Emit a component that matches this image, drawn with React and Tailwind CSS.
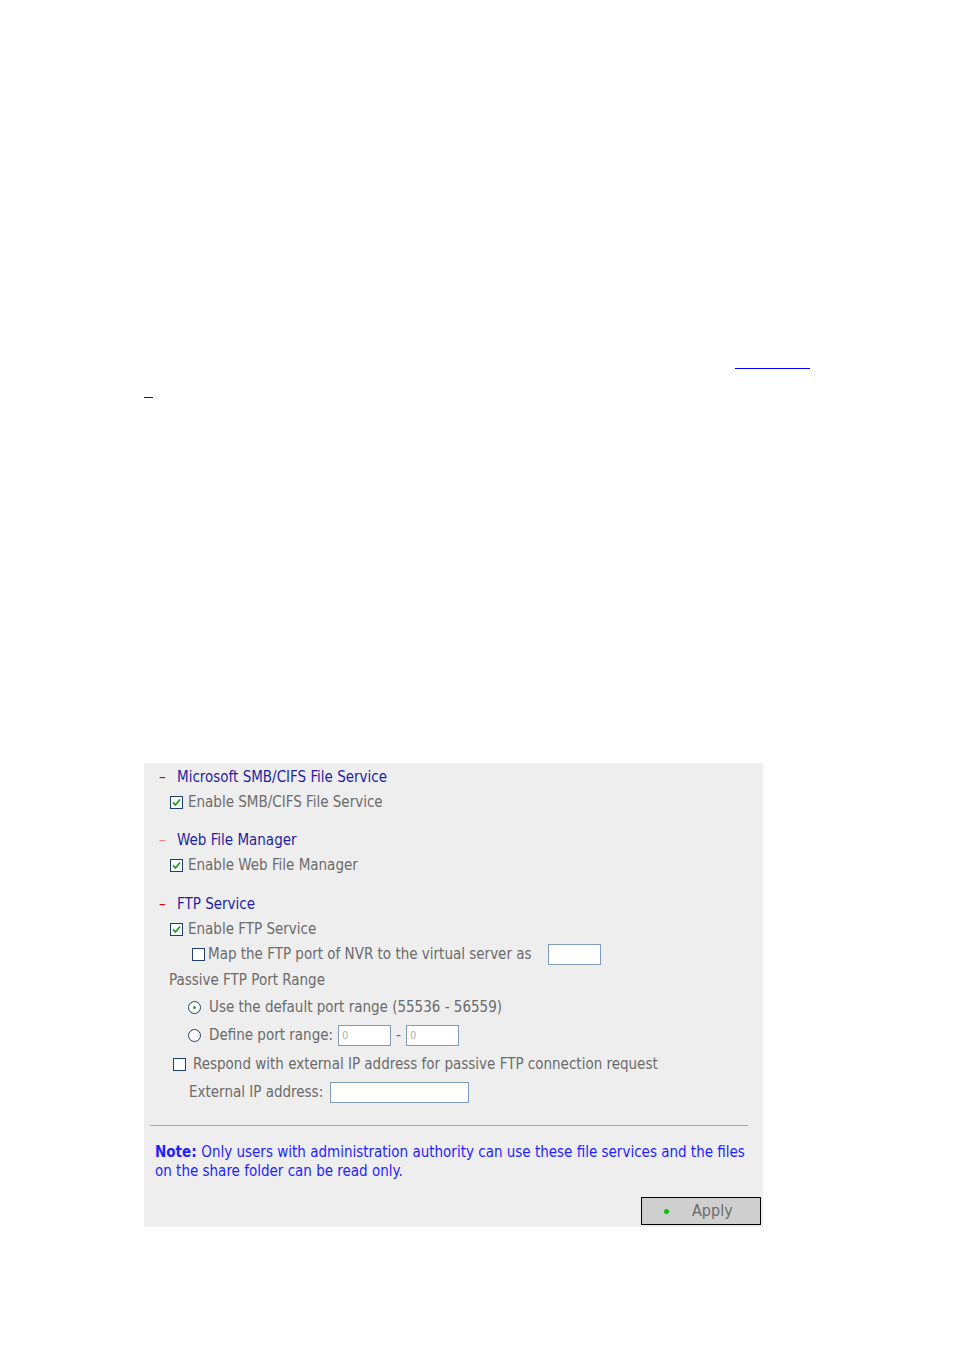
import React from 'react';

function Check({ checked }) {
  return (
    <span className="inline-flex w-[13px] h-[13px] border border-[#1c3f6e] bg-white items-center justify-center shrink-0">
      {checked && (
        <svg width="9" height="9" viewBox="0 0 9 9">
          <path d="M1 4.5 L3.5 7 L8 1.5" fill="none" stroke="#21a121" strokeWidth="1.8" />
        </svg>
      )}
    </span>
  );
}

function Radio({ checked }) {
  return (
    <span className="inline-flex w-[13px] h-[13px] rounded-full border border-[#1c3f6e] bg-white items-center justify-center shrink-0">
      {checked && <span className="w-[3px] h-[3px] rounded-full bg-[#21a121]" />}
    </span>
  );
}

function Heading({ children, faded }) {
  return (
    <div className="h-[25px] flex items-center">
      <span className={'w-[33px] pl-[15px] ' + (faded ? 'text-[#f08080]' : 'text-[#e00000]')}>–</span>
      <span className="text-[#1f1fa0]">{children}</span>
    </div>
  );
}

export default function App() {
  return (
    <div className="w-[954px] h-[1350px] bg-white" style={{ fontFamily: 'Tahoma, "DejaVu Sans Condensed", "Liberation Sans", sans-serif' }}>
      <div className="h-[368px]" />
      <div className="ml-[735px] w-[75px] h-px bg-[#0000ff]" />
      <div className="h-[28px]" />
      <div className="ml-[144px] w-[9px] h-px bg-[#0000ff]" />
      <div className="h-[365px]" />

      <div className="ml-[144px] w-[619px] h-[464px] bg-[#eeeeee] pt-[2px] text-[15px] text-[#6b6b6b]">
        <Heading>Microsoft SMB/CIFS File Service</Heading>
        <div className="h-[25px] flex items-center gap-[5px] pl-[26px]">
          <Check checked />
          <span>Enable SMB/CIFS File Service</span>
        </div>

        <div className="mt-[13px]">
          <Heading faded>Web File Manager</Heading>
        </div>
        <div className="h-[25px] flex items-center gap-[5px] pl-[26px]">
          <Check checked />
          <span>Enable Web File Manager</span>
        </div>

        <div className="mt-[14px]">
          <Heading>FTP Service</Heading>
        </div>
        <div className="h-[25px] flex items-center gap-[5px] pl-[26px]">
          <Check checked />
          <span>Enable FTP Service</span>
        </div>
        <div className="h-[25px] flex items-center pl-[48px]">
          <Check />
          <span className="ml-[3px]">Map the FTP port of NVR to the virtual server as</span>
          <span className="ml-[16px] w-[53px] h-[21px] border border-[#7f9db9] bg-white" />
        </div>
        <div className="h-[26px] flex items-center pl-[25px]">Passive FTP Port Range</div>
        <div className="h-[28px] flex items-center gap-[8px] pl-[44px]">
          <Radio checked />
          <span>Use the default port range (55536 - 56559)</span>
        </div>
        <div className="h-[29px] flex items-center pl-[44px]">
          <Radio />
          <span className="ml-[8px]">Define port range:</span>
          <span className="ml-[5px] w-[53px] h-[21px] border border-[#7f9db9] bg-white text-[11px] text-[#b0b0b0] pl-[3px] leading-[19px]">0</span>
          <span className="mx-[5px]">-</span>
          <span className="w-[53px] h-[21px] border border-[#7f9db9] bg-white text-[11px] text-[#b0b0b0] pl-[3px] leading-[19px]">0</span>
        </div>
        <div className="h-[29px] flex items-center gap-[7px] pl-[29px]">
          <Check />
          <span>Respond with external IP address for passive FTP connection request</span>
        </div>
        <div className="h-[26px] flex items-center pl-[45px]">
          <span>External IP address:</span>
          <span className="ml-[7px] w-[139px] h-[21px] border border-[#7f9db9] bg-white" />
        </div>

        <div className="mt-[20px] ml-[6px] w-[598px] h-px bg-[#a8a8a8]" />

        <p className="mt-[17px] pl-[11px] w-[610px] text-[#1f1fff] leading-[19px]">
          <b>Note: </b>Only users with administration authority can use these file services and the files on the share folder can be read only.
        </p>

        <div className="mt-[16px] flex justify-end pr-[2px]">
          <div className="w-[120px] h-[28px] border border-black bg-[#cfcfcf] flex items-center">
            <span className="ml-[22px] w-[5px] h-[5px] rounded-full bg-[#11c011]" />
            <span className="ml-[23px] text-[16px] text-[#6b6b6b]">Apply</span>
          </div>
        </div>
      </div>
    </div>
  );
}
